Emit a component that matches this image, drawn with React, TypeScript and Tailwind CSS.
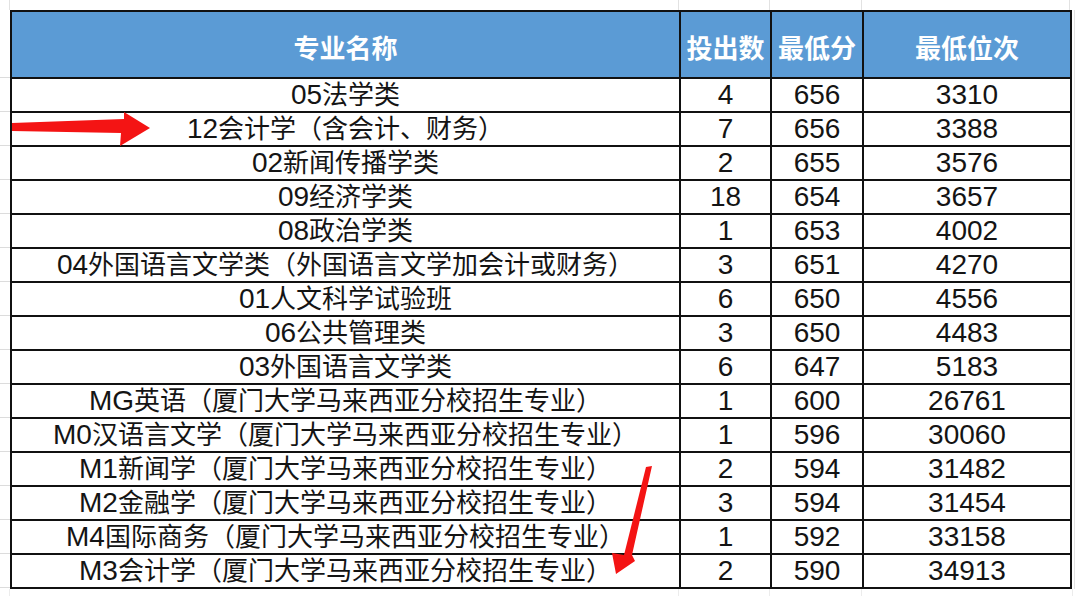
import React from "react";

const rows: [string, string, string, string][] = [
  ["05法学类", "4", "656", "3310"],
  ["12会计学（含会计、财务）", "7", "656", "3388"],
  ["02新闻传播学类", "2", "655", "3576"],
  ["09经济学类", "18", "654", "3657"],
  ["08政治学类", "1", "653", "4002"],
  ["04外国语言文学类（外国语言文学加会计或财务）", "3", "651", "4270"],
  ["01人文科学试验班", "6", "650", "4556"],
  ["06公共管理类", "3", "650", "4483"],
  ["03外国语言文学类", "6", "647", "5183"],
  ["MG英语（厦门大学马来西亚分校招生专业）", "1", "600", "26761"],
  ["M0汉语言文学（厦门大学马来西亚分校招生专业）", "1", "596", "30060"],
  ["M1新闻学（厦门大学马来西亚分校招生专业）", "2", "594", "31482"],
  ["M2金融学（厦门大学马来西亚分校招生专业）", "3", "594", "31454"],
  ["M4国际商务（厦门大学马来西亚分校招生专业）", "1", "592", "33158"],
  ["M3会计学（厦门大学马来西亚分校招生专业）", "2", "590", "34913"],
];

const headers = ["专业名称", "投出数", "最低分", "最低位次"];

function Cell({ text }: { text: string }) {
  const parts = text.split(/([0-9A-Z]+)/).filter((p) => p.length > 0);
  return (
    <>
      {parts.map((p, i) =>
        /^[0-9A-Z]+$/.test(p) ? (
          <span key={i} className="text-[28px]">
            {p}
          </span>
        ) : (
          <span key={i} className="text-[26px]">
            {p}
          </span>
        )
      )}
    </>
  );
}

export default function App() {
  return (
    <div
      className="relative w-[1078px] h-[596px] overflow-hidden bg-white flex flex-col"
      style={{ fontFamily: '"Liberation Sans", "Noto Sans CJK SC", sans-serif' }}
    >
      {/* top gutter with faint gridlines */}
      <div className="h-[10px] flex shrink-0">
        <div className="w-[10px] border-r border-[#e2e2e2]" />
        <div className="w-[669px] border-r border-[#e2e2e2]" />
        <div className="w-[91px] border-r border-[#e2e2e2]" />
        <div className="w-[92px] border-r border-[#e2e2e2]" />
        <div className="w-[208px] border-r border-[#e2e2e2]" />
        <div className="flex-1" />
      </div>

      <div className="flex shrink-0">
        {/* left gutter ticks */}
        <div className="w-[10px] flex flex-col">
          <div className="h-[68px] border-b border-[#dcdcdc]" />
          {rows.map((_, i) => (
            <div key={i} className="h-[34px] border-b border-[#dcdcdc]" />
          ))}
        </div>

        {/* table */}
        <div className="grid grid-cols-[667px_89px_90px_206px] gap-[2px] bg-[#111] p-[2px] w-[1062px]">
          {headers.map((h) => (
            <div
              key={h}
              className="h-[65px] bg-[#5b9bd5] flex items-center justify-center pt-[4px] text-white text-[26px] font-bold leading-none whitespace-nowrap"
              style={{ fontFamily: '"Noto Sans CJK SC", sans-serif' }}
            >
              {h}
            </div>
          ))}
          {rows.map((r, i) => (
            <React.Fragment key={i}>
              {r.map((c, j) => (
                <div
                  key={j}
                  className="h-[32px] bg-white flex items-center justify-center leading-none text-[#141414] whitespace-nowrap"
                >
                  <Cell text={c} />
                </div>
              ))}
            </React.Fragment>
          ))}
        </div>

        {/* right gutter */}
        <div className="w-[3px] border-r border-[#e2e2e2]" />
      </div>

      {/* bottom gutter */}
      <div className="flex-1 flex">
        <div className="w-[10px] border-r border-[#ececec]" />
        <div className="w-[669px] border-r border-[#ececec]" />
        <div className="w-[91px] border-r border-[#ececec]" />
        <div className="w-[92px] border-r border-[#ececec]" />
        <div className="w-[211px] border-r border-[#ececec]" />
        <div className="flex-1" />
      </div>

      {/* red annotation arrows */}
      <svg
        className="absolute inset-0 pointer-events-none"
        width="1078"
        height="596"
        viewBox="0 0 1078 596"
      >
        <polygon
          points="12,123 124,119 124,112 150,128 120,146 121,133 12,131"
          fill="#f41414"
        />
        <polygon
          points="646,467 652,466 632,555 635,561 616,574 612,553 624,555"
          fill="#f41414"
        />
      </svg>
    </div>
  );
}
